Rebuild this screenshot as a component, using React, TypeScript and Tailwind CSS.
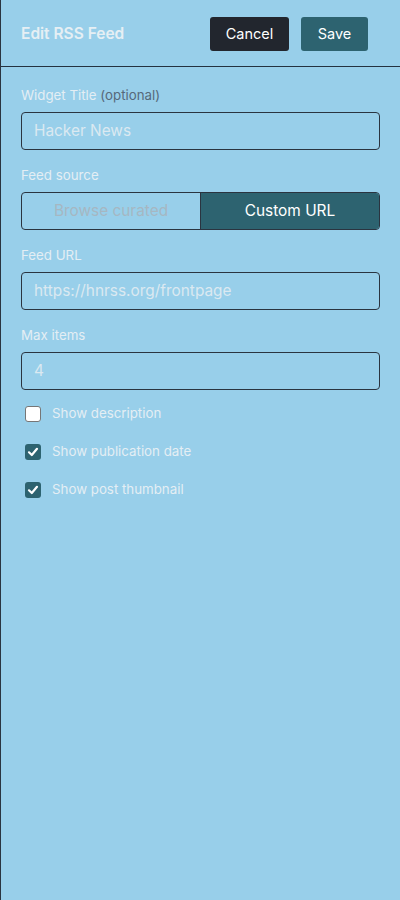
import React from 'react';

const font = { fontFamily: '"Inter", "Noto Sans", sans-serif' };

const Field: React.FC<{ label: React.ReactNode; value: string }> = ({ label, value }) => (
  <div className="flex flex-col">
    <label className="text-[13.3px] leading-[18px] text-[#e4eef4] mb-[8px]">{label}</label>
    <div className="h-[38px] rounded-[4px] border border-[#2a3440] flex items-center px-[12px] text-[15.4px] text-[#dbe9f1]">
      {value}
    </div>
  </div>
);

const Check: React.FC<{ checked: boolean; label: string }> = ({ checked, label }) => (
  <div className="flex items-center h-[38px] pl-[4px]">
    {checked ? (
      <span className="w-[16px] h-[16px] rounded-[3px] bg-[#2d6370] flex items-center justify-center">
        <svg width="12" height="12" viewBox="0 0 12 12">
          <path d="M2 6.3 L4.8 9 L10 2.8" fill="none" stroke="white" strokeWidth="2.2" strokeLinecap="round" strokeLinejoin="round" />
        </svg>
      </span>
    ) : (
      <span className="w-[16px] h-[16px] rounded-[3px] bg-white border border-[#767676]" />
    )}
    <span className="ml-[11px] text-[13.3px] text-[#e4eef4]">{label}</span>
  </div>
);

export default function App() {
  return (
    <div className="w-[400px] h-[900px] bg-[#98cfea] border-l border-[#2a3440] flex flex-col" style={font}>
      <div className="h-[67px] border-b border-[#243240] flex items-center pl-[20px] pr-[32px] pt-[1px] shrink-0">
        <h1 className="text-[15.5px] font-semibold text-[#e6eff4] flex-1">Edit RSS Feed</h1>
        <button className="h-[34px] w-[79px] rounded-[3px] bg-[#22262e] text-white text-[14.5px]">Cancel</button>
        <button className="h-[34px] w-[67px] ml-[12px] rounded-[3px] bg-[#2d6370] text-white text-[14.5px]">Save</button>
      </div>
      <div className="flex flex-col px-[20px] pt-[19px] gap-[16px]">
        <Field
          label={
            <>
              Widget Title <span className="text-[#56697a]">(optional)</span>
            </>
          }
          value="Hacker News"
        />
        <div className="flex flex-col">
          <label className="text-[13.3px] leading-[18px] text-[#e4eef4] mb-[8px]">Feed source</label>
          <div className="h-[38px] rounded-[4px] border border-[#2a3440] flex overflow-hidden">
            <div className="flex-1 flex items-center justify-center text-[15.4px] text-[#a6b7c2] border-r border-[#2a3440]">
              Browse curated
            </div>
            <div className="flex-1 flex items-center justify-center text-[15.4px] text-white bg-[#2d6370]">
              Custom URL
            </div>
          </div>
        </div>
        <Field label="Feed URL" value="https://hnrss.org/frontpage" />
        <Field label="Max items" value="4" />
      </div>
      <div className="flex flex-col px-[20px] pt-[5px]">
        <Check checked={false} label="Show description" />
        <Check checked label="Show publication date" />
        <Check checked label="Show post thumbnail" />
      </div>
    </div>
  );
}
